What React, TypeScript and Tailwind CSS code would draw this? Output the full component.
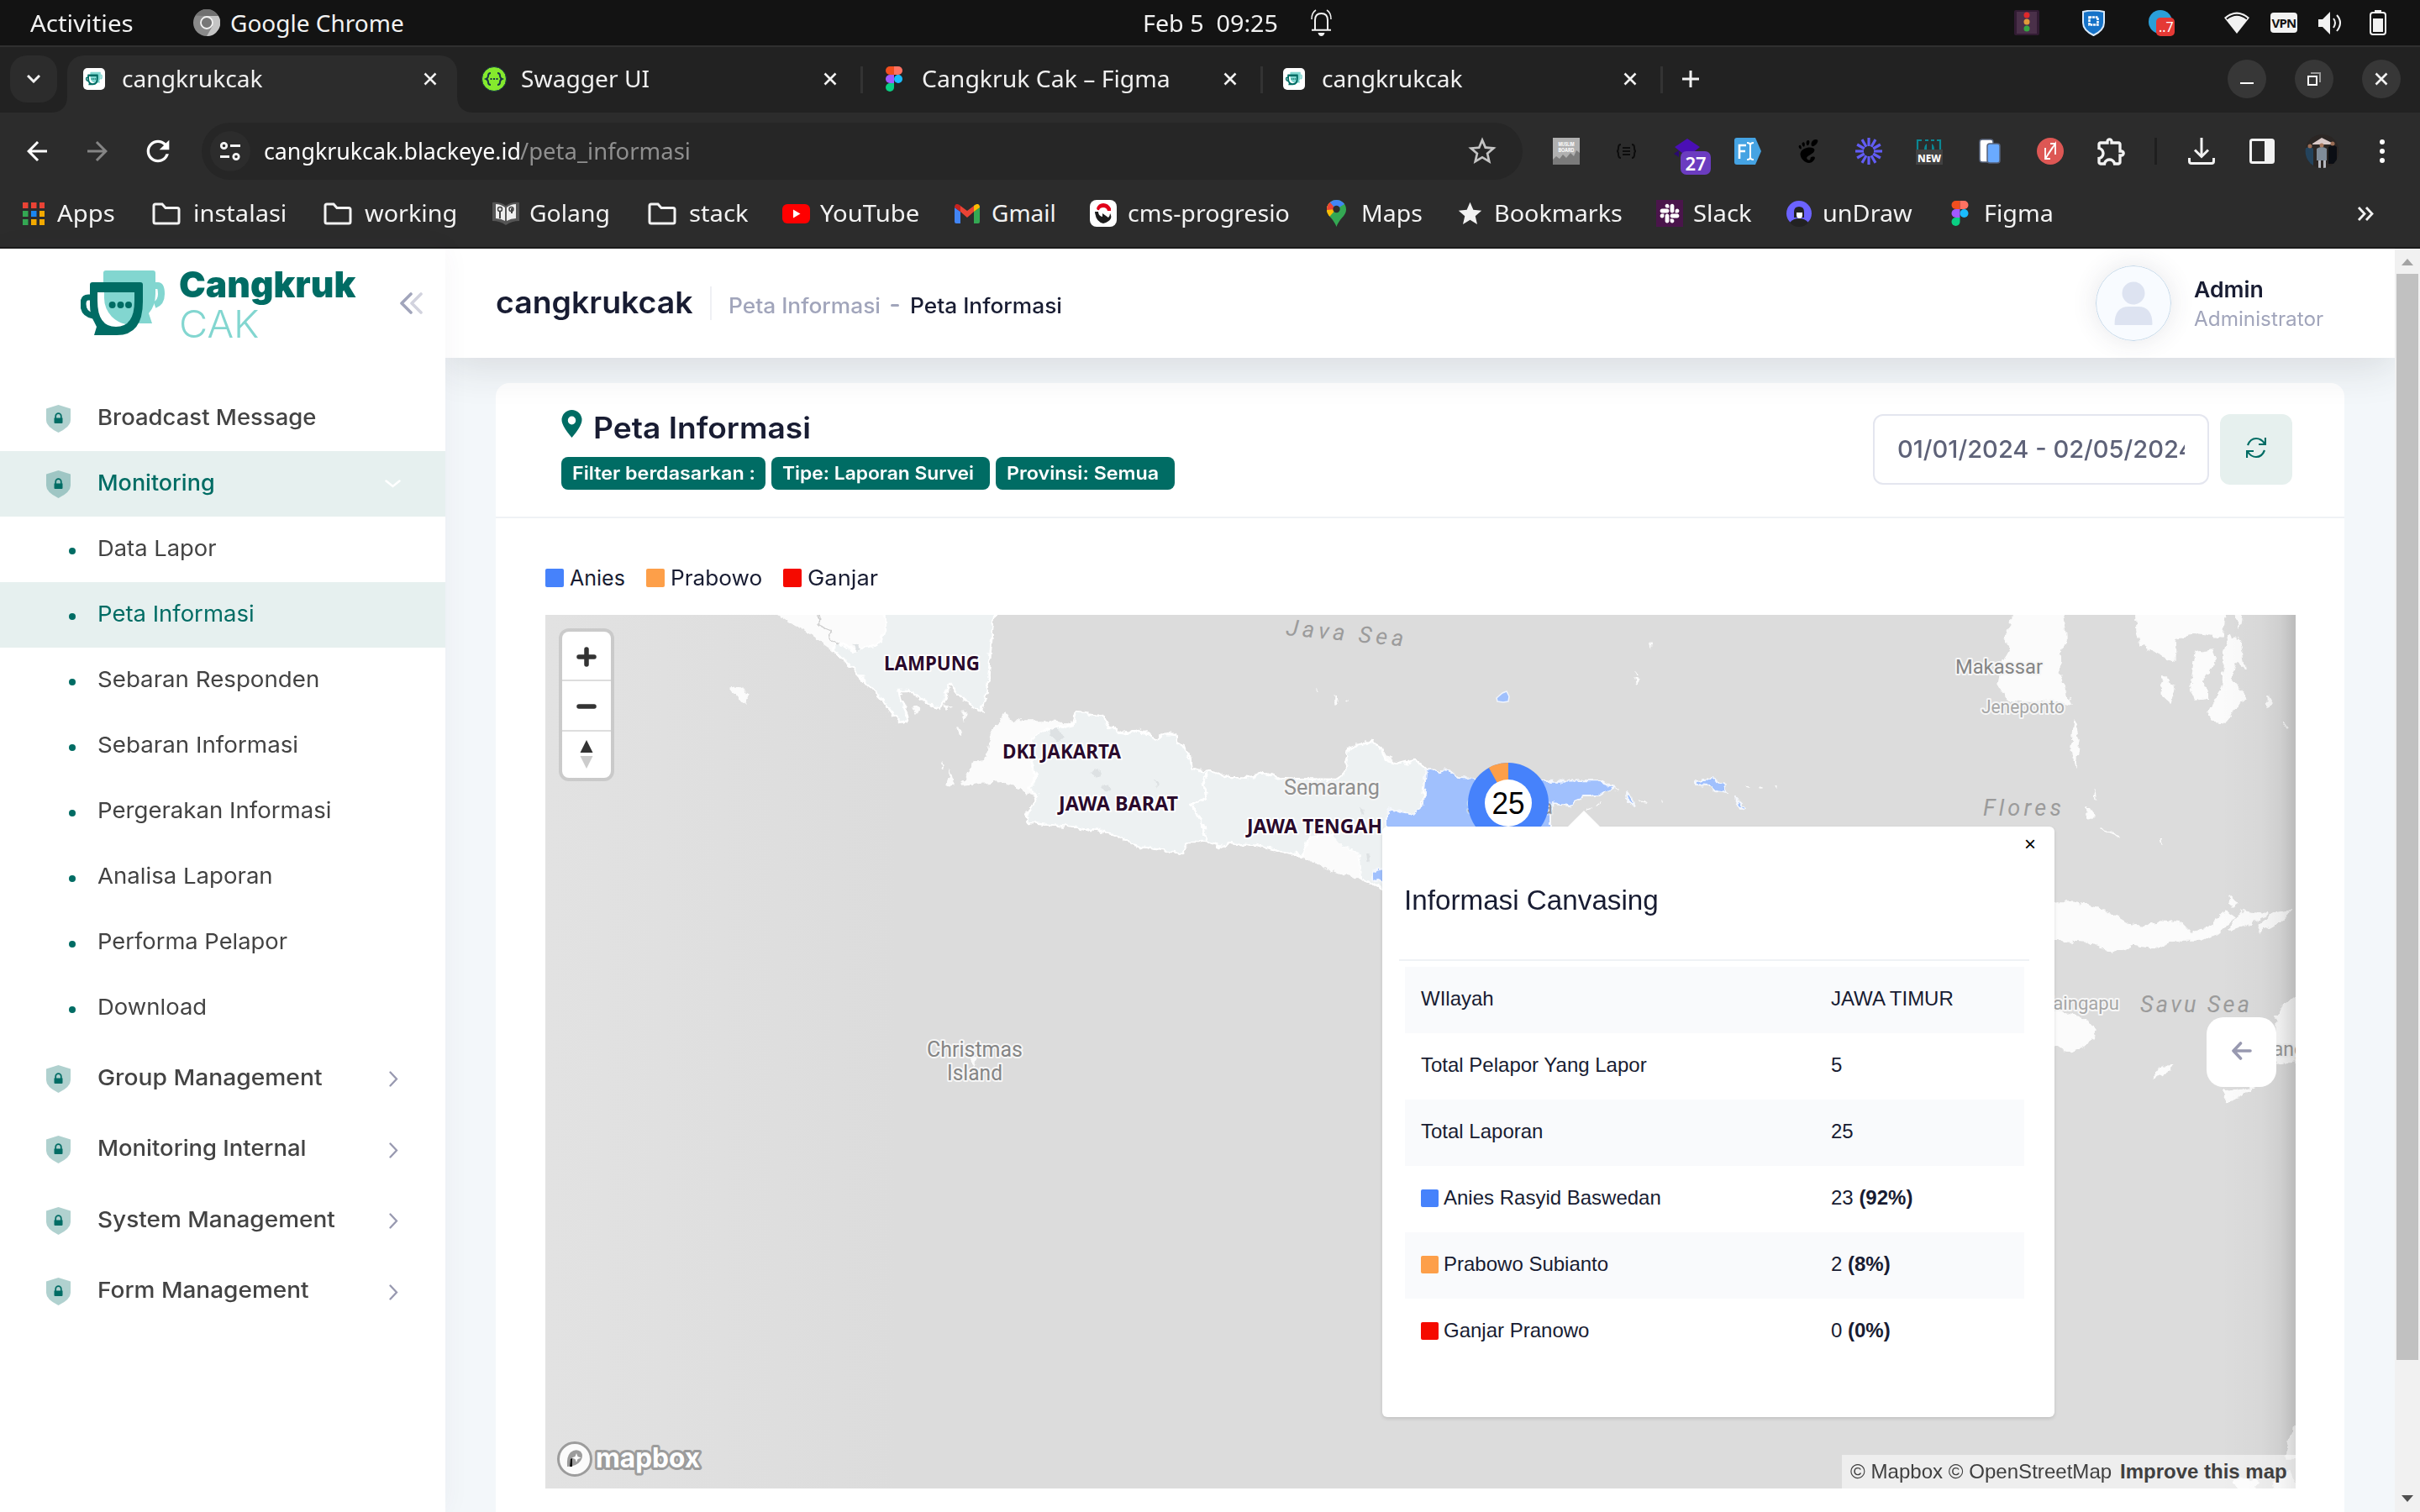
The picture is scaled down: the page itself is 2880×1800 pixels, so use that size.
import { useLayoutEffect, useRef, useState, type ReactNode } from "react";
import { FaSlack } from "react-icons/fa";
import { SiGnome } from "react-icons/si";
import { MdArrowBack, MdArrowForward, MdRefresh, MdStarBorder, MdStar, MdOutlineExtension } from "react-icons/md";

/** One line of text, condensed or widened so that its ink spans `w` pixels. */
function Fit({ w, className = "", children }: { w: number; className?: string; children: ReactNode }) {
  const ref = useRef<HTMLSpanElement>(null);
  const [scale, setScale] = useState(1);
  useLayoutEffect(() => {
    if (ref.current) setScale((w + 1) / ref.current.offsetWidth);
  }, [w]);
  return (
    <span className={`inline-block shrink-0 whitespace-pre ${className}`} style={{ width: w }}>
      <span ref={ref} className="inline-block origin-left" style={{ transform: `scaleX(${scale})` }}>
        {children}
      </span>
    </span>
  );
}

const UI = "font-['Noto_Sans',sans-serif]";

/* ---------- icons ---------- */

function CupArt() {
  return (
    <>
      <path d="M185 340h3q4 0 4 10t-8 13" fill="none" stroke="#82d6d0" strokeWidth="8" />
      <path d="M123 340V325q0-3 3-3h56q3 0 3 3v25q0 14-8 23l4 12h-26q-32-6-32-30z" fill="#82d6d0" />
      <path d="M116 345h44v12q0 32-22 32t-22-32z" fill="#fff" />
      <path d="M124 345h38v12q0 20-12 29-10-2-17-9-9-10-9-22z" fill="#82d6d0" />
      <path d="M110 354h-5q-6 0-6 8 0 12 12 14" fill="none" stroke="#006c64" strokeWidth="7" />
      <path
        fillRule="evenodd"
        d="M107 346v-7q0-3 3-3h57q3 0 3 3v20q0 40-31 40h-27l3-10-3-6q-5-8-5-20zM116 348v10q0 31 22 31t22-31v-10z"
        fill="#006c64"
      />
      <circle cx="133.6" cy="363" r="4" fill="#006c64" />
      <circle cx="143.5" cy="363" r="4" fill="#006c64" />
      <circle cx="153" cy="363" r="4" fill="#006c64" />
    </>
  );
}

function CupFavicon() {
  return (
    <svg className="h-[26px] w-[26px]" viewBox="0 0 26 26">
      <rect width="26" height="26" rx="5" fill="#fff" />
      <g transform="translate(3 4) scale(.2) translate(-96 -318)">
        <CupArt />
      </g>
    </svg>
  );
}

function Figma({ className }: { className: string }) {
  return (
    <svg className={className} viewBox="0 0 20 30">
      <path d="M10 0H5a5 5 0 0 0 0 10h5z" fill="#f24e1e" />
      <path d="M10 0h5a5 5 0 0 1 0 10h-5z" fill="#ff7262" />
      <path d="M10 10H5a5 5 0 0 0 0 10h5z" fill="#a259ff" />
      <circle cx="15" cy="15" r="5" fill="#1abcfe" />
      <path d="M10 20H5a5 5 0 1 0 5 5z" fill="#0acf83" />
    </svg>
  );
}

function Cross() {
  return (
    <svg className="h-4 w-4" viewBox="0 0 16 16" stroke="#f2f2f2" strokeWidth="2.6">
      <path d="M1.5 1.5l13 13M14.5 1.5l-13 13" />
    </svg>
  );
}

function Folder() {
  return (
    <svg className="h-[27px] w-[34px]" viewBox="0 0 34 27" fill="none" stroke="#f2f2f2" strokeWidth="3">
      <path d="M2 4q0-2 2-2h8l4 4.500h14q2 0 2 2V23q0 2-2 2H4q-2 0-2-2z" />
    </svg>
  );
}

function Shield() {
  return (
    <svg className="h-[33px] w-[29px]" viewBox="0 0 29 33">
      <path d="M0 4.500L14.500 0 29 4.500V18q0 8-14.500 15Q0 26 0 18z" fill="#006c64" opacity=".31" />
      <path d="M9.500 15.500h10V21q0 1-1 1h-8q-1 0-1-1z" fill="#006c64" />
      <path d="M11.200 16v-2.500a3.300 3.300 0 0 1 6.600 0V16" fill="none" stroke="#006c64" strokeWidth="1.700" />
    </svg>
  );
}

/* ---------- desktop bar ---------- */

function DesktopBar() {
  return (
    <div className={`flex h-[56px] items-center border-b-2 border-[#303030] bg-[#131313] pr-10 pl-9 text-[28px] leading-9 text-[#f2f2f2] ${UI}`}>
      <Fit w={122} className="-mt-px">Activities</Fit>
      <svg className="ml-[72px] h-8 w-8 shrink-0" viewBox="0 0 32 32">
        <circle cx="16" cy="16" r="16" fill="#8a8a8a" />
        <path d="M16 8h14a16 16 0 0 1-14 24l7-12z" fill="#c4c4c4" />
        <path d="M2.500 7.500A16 16 0 0 1 30 8H16z" fill="#707070" />
        <circle cx="16" cy="16" r="7" fill="#777" stroke="#f2f2f2" strokeWidth="1.800" />
      </svg>
      <Fit w={206} className="-mt-px ml-3">Google Chrome</Fit>
      <Fit w={160} className="-mt-px ml-[880px]">{"Feb 5  09:25"}</Fit>
      <svg className="ml-10 h-[32px] w-[25px] shrink-0" viewBox="0 0 25 32" fill="none" stroke="#f2f2f2" strokeWidth="2">
        <path d="M5 24V13q0-8 7.500-8T20 13v11M1 24.800h23" />
        <path d="M1 12q0-8 5-11M24 12q0-8-5-11" strokeWidth="1.500" />
        <path d="M8.500 28h8q-1 4-4 4t-4-4z" fill="#f2f2f2" stroke="none" />
      </svg>
      <svg className="ml-auto h-[30px] w-[30px] shrink-0" viewBox="0 0 30 30">
        <rect width="30" height="30" rx="2" fill="#321c33" />
        <rect x="3" y="2" width="24" height="26" fill="#4a3049" />
        <circle cx="15" cy="6" r="3.500" fill="#e0282b" />
        <circle cx="15" cy="14" r="3.500" fill="#e09a3a" />
        <circle cx="15" cy="22" r="3.500" fill="#35a542" />
      </svg>
      <svg className="ml-[51px] h-[31px] w-[27px] shrink-0" viewBox="0 0 27 31">
        <path d="M1 2q12-3 25 0v13q0 9-12.500 15Q1 24 1 15z" fill="#1673c8" stroke="#d9eafa" strokeWidth="2" />
        <rect x="8.500" y="8.500" width="10" height="9" fill="none" stroke="#fff" strokeWidth="2.600" strokeDasharray="2.800 0.800" />
        <rect x="11.500" y="11.500" width="4" height="3" fill="#1673c8" />
      </svg>
      <svg className="ml-[52px] h-[32px] w-[32px] shrink-0" viewBox="0 0 32 32">
        <circle cx="14" cy="15" r="14" fill="#2b9fd9" />
        <rect x="9" y="10" width="22" height="22" rx="5" fill="#e53935" />
        <text x="12" y="27" fontSize="16" fill="#fff" fontFamily="Noto Sans">..7</text>
      </svg>
      <svg className="ml-[58px] h-[26px] w-[30px] shrink-0" viewBox="0 0 30 26">
        <path d="M15 26L0 7Q15-6 30 7z" fill="#f2f2f2" />
        <path d="M3 8.500Q15-1 27 8.500" fill="none" stroke="#131313" strokeWidth="1.800" />
      </svg>
      <span className="ml-[25px] flex h-6 w-8 shrink-0 items-center justify-center rounded-[4px] bg-[#f2f2f2] text-[15px] leading-5 font-bold tracking-tighter text-[#131313]">VPN</span>
      <svg className="ml-[25px] h-[27px] w-[30px] shrink-0" viewBox="0 0 30 27" fill="none" stroke="#f2f2f2" strokeWidth="2">
        <path d="M0 9h5l9-9v27l-9-9H0z" fill="#f2f2f2" stroke="none" />
        <path d="M18 8q4 5 0 11M22 4q8 9 0 19" />
      </svg>
      <svg className="ml-[31px] h-[30px] w-5 shrink-0" viewBox="0 0 20 30">
        <rect x="6" width="8" height="4" fill="#f2f2f2" />
        <rect x="1" y="3" width="18" height="26" rx="3" fill="none" stroke="#f2f2f2" strokeWidth="2" />
        <rect x="4" y="10" width="12" height="16" fill="#f2f2f2" />
      </svg>
    </div>
  );
}

/* ---------- browser chrome ---------- */

function TabStrip() {
  return (
    <div className={`flex h-[78px] bg-[#222222] pt-[10px] pr-[23px] pl-3 text-[28px] leading-9 text-[#f0f0f0] ${UI}`}>
      <div className="flex h-14 w-14 items-center justify-center rounded-[20px] bg-[#2c2c2c]">
        <svg className="h-[10px] w-4" viewBox="0 0 16 10" fill="none" stroke="#f2f2f2" strokeWidth="3">
          <path d="M1 1l7 7 7-7" />
        </svg>
      </div>
      <div className="relative ml-3 flex h-[68px] w-[464px] items-center rounded-t-[20px] bg-[#2c2c2c] pr-6 pb-3 pl-[19px]">
        <svg className="absolute bottom-0 -left-5 h-5 w-5" viewBox="0 0 20 20"><path d="M20 0v20H0Q20 20 20 0z" fill="#2c2c2c" /></svg>
        <svg className="absolute -right-5 bottom-0 h-5 w-5" viewBox="0 0 20 20"><path d="M0 0v20h20Q0 20 0 0z" fill="#2c2c2c" /></svg>
        <CupFavicon />
        <Fit w={167} className="-mt-[3px] ml-5">cangkrukcak</Fit>
        <span className="ml-auto"><Cross /></span>
      </div>
      <div className="flex h-14 w-[482px] items-center pr-[30px] pl-[29px]">
        <svg className="h-[30px] w-[30px]" viewBox="0 0 30 30">
          <circle cx="15" cy="15" r="14.500" fill="#85ea2d" stroke="#173647" />
          <path d="M11 8q-3 0-3 3t-2.500 4Q8 16 8 19t3 3M19 8q3 0 3 3t2.500 4Q22 16 22 19t-3 3" fill="none" stroke="#173647" strokeWidth="2" />
          <path d="M10.500 15h2M14 15h2M17.500 15h2" stroke="#173647" strokeWidth="2" />
        </svg>
        <Fit w={152} className="-mt-[3px] ml-[17px]">Swagger UI</Fit>
        <span className="ml-auto"><Cross /></span>
      </div>
      <span className="-ml-[2px] mt-[13px] h-8 w-[3px] bg-[#333333]" />
      <div className="flex h-14 w-[475px] items-center pr-[30px] pl-[27px]">
        <Figma className="h-[30px] w-5" />
        <Fit w={295} className="-mt-[3px] ml-[23px]">Cangkruk Cak – Figma</Fit>
        <span className="ml-auto"><Cross /></span>
      </div>
      <span className="-ml-[2px] mt-[13px] h-8 w-[3px] bg-[#333333]" />
      <div className="flex h-14 w-[475px] items-center pr-[30px] pl-6">
        <CupFavicon />
        <Fit w={167} className="-mt-[3px] ml-5">cangkrukcak</Fit>
        <span className="ml-auto"><Cross /></span>
      </div>
      <span className="-ml-[2px] mt-[13px] h-8 w-[3px] bg-[#333333]" />
      <svg className="mt-[18px] ml-[23px] h-5 w-5" viewBox="0 0 20 20" stroke="#f2f2f2" strokeWidth="3"><path d="M10 0v20M0 10h20" /></svg>
      <div className="ml-auto flex h-14 items-center gap-[34px]">
        <span className="flex h-[46px] w-[46px] items-center justify-center rounded-full bg-[#373737]">
          <span className="mt-[10px] h-[2px] w-4 bg-white" />
        </span>
        <span className="flex h-[46px] w-[46px] items-center justify-center rounded-full bg-[#373737]">
          <svg className="h-4 w-4" viewBox="0 0 16 16" fill="none" strokeWidth="2">
            <path d="M4 1h11v11" stroke="#999" />
            <rect x="1" y="5" width="10" height="10" stroke="#fff" />
          </svg>
        </span>
        <span className="flex h-[46px] w-[46px] items-center justify-center rounded-full bg-[#373737]">
          <Cross />
        </span>
      </div>
    </div>
  );
}

function Extensions() {
  return (
    <>
      <svg className="ml-9 h-8 w-8" viewBox="0 0 32 32">
        <rect width="32" height="32" fill="#b0b0b0" />
        <path d="M0 26l4-4 4 3 4-5 4 4 5-6 4 4 3-7 4 3v14H0z" fill="#7b7b7b" />
        <text x="16" y="10" fontSize="6" fontWeight="700" textAnchor="middle" textLength="19" lengthAdjust="spacingAndGlyphs" fill="#fff" fontFamily="Inter">MUSLIM</text>
        <text x="16" y="16.500" fontSize="6" fontWeight="700" textAnchor="middle" textLength="19" lengthAdjust="spacingAndGlyphs" fill="#fff" fontFamily="Inter">BOARD</text>
      </svg>
      <svg className="ml-[43px] h-5 w-[25px]" viewBox="0 0 25 20" fill="none" stroke="#0d0d0d" strokeWidth="2">
        <path d="M6 2Q3 2 3 6t-2 4q2 0 2 4t3 4M19 2q3 0 3 4t2 4q-2 0-2 4t-3 4M8 6h9M8 10h9M8 14h9" />
      </svg>
      <div className="relative ml-[44px] h-8 w-[44px]">
        <svg className="h-8 w-8" viewBox="0 0 32 32">
          <path d="M16 1l15 10-15 12L1 11z" fill="#4a0fb5" />
          <path d="M0 19l6-4v8z" fill="#2a0a70" />
        </svg>
        <span className="absolute top-4 left-2 flex h-7 w-9 items-center justify-center rounded-[7px] bg-[#6b3cc0] text-[22px] leading-7 font-semibold text-white">27</span>
      </div>
      <svg className="ml-7 h-8 w-8" viewBox="0 0 32 32">
        <path d="M3 0h22l7 16-7 16H3q-3 0-3-3V3q0-3 3-3z" fill="#45a3e3" />
        <path d="M6 25V9h8M6 16h7" fill="none" stroke="#fff" strokeWidth="2.600" />
        <path d="M19 8v16M15 6q4 0 4 3 0-3 4-3M15 26q4 0 4-3 0 3 4 3" fill="none" stroke="#fff" strokeWidth="2" />
      </svg>
      <SiGnome className="ml-[42px] h-[28px] w-[28px] text-black" />
      <svg className="ml-[42px] h-8 w-8" viewBox="-16 -16 32 32" stroke="#625df5" strokeWidth="3.200">
        {[0, 30, 60, 90, 120, 150, 180, 210, 240, 270, 300, 330].map((a) => (
          <path key={a} d="M0-6V-16" transform={`rotate(${a})`} />
        ))}
      </svg>
      <svg className="ml-10 h-8 w-8" viewBox="0 0 32 32">
        <path d="M2 14V3h5M11 3h4M18 3h4M25 3h4v11" fill="none" stroke="#0b8793" strokeWidth="2.200" />
        <path d="M10 14q0-5 3-7v7zM22 14q0-5-3-7v7z" fill="#0b8793" />
        <rect y="14" width="32" height="18" fill="#424242" />
        <text x="16" y="28.500" fontSize="13" fontWeight="800" textAnchor="middle" textLength="28" lengthAdjust="spacingAndGlyphs" fill="#fff" fontFamily="Noto Sans">NEW</text>
      </svg>
      <svg className="ml-[43px] h-8 w-[26px]" viewBox="0 0 26 32">
        <rect x="1" y="2" width="16" height="27" rx="3" fill="#fff" stroke="#56627a" strokeWidth="1.500" />
        <rect x="10" y="7" width="15" height="23" rx="3" fill="#6aaaff" stroke="#56627a" strokeWidth="1.500" />
      </svg>
      <svg className="ml-[43px] h-8 w-8" viewBox="0 0 32 32" fill="none" stroke="#fff" strokeWidth="1.800">
        <circle cx="16" cy="16" r="16" fill="#dd5754" stroke="none" />
        <path d="M10 12v13h6M10 25L22 7v13M22 7h-6M13 20l6-9" />
      </svg>
      <MdOutlineExtension className="ml-[37px] h-[40px] w-[40px] text-[#f2f2f2]" />
      <span className="ml-[31px] h-8 w-[3px] bg-[#1f1f1f]" />
      <svg className="ml-[37px] h-8 w-8" viewBox="0 0 32 32" fill="none" stroke="#f2f2f2" strokeWidth="3">
        <path d="M16 0v22M8 14.500l8 8 8-8M1.500 24v4q0 2.500 2.500 2.500h24q2.500 0 2.500-2.500v-4" />
      </svg>
      <svg className="ml-[41px] h-[30px] w-[30px]" viewBox="0 0 30 30">
        <rect x="1.500" y="1.500" width="27" height="27" rx="2" fill="none" stroke="#f2f2f2" strokeWidth="3" />
        <path d="M18 1h10v28H18z" fill="#f2f2f2" />
      </svg>
      <svg className="ml-9 h-10 w-[41px]" viewBox="0 0 41 40">
        <defs><clipPath id="me"><circle cx="20.500" cy="20" r="20" /></clipPath></defs>
        <g clipPath="url(#me)">
          <rect width="41" height="40" fill="#2b2624" />
          <path d="M9 11L20 4l12 6v2H9z" fill="#d9c9c8" />
          <path d="M0 17q5-4 10 0v23H0z" fill="#24435c" />
          <path d="M14 17q6-4 12 0v14H14z" fill="#7f8c99" />
          <path d="M28 15q6-4 10 0v20H28z" fill="#0b0e14" />
          <circle cx="20" cy="13" r="2.500" fill="#a8795f" />
          <circle cx="33" cy="11" r="2.500" fill="#9a6d55" />
          <circle cx="6" cy="14" r="2.500" fill="#9a6d55" />
          <path d="M16 31h3v9h-3zM22 31h3v9h-3z" fill="#b7b9c0" />
        </g>
      </svg>
      <span className="ml-12 flex flex-col gap-[5px]">
        <span className="h-[6px] w-[6px] rounded-full bg-white" />
        <span className="h-[6px] w-[6px] rounded-full bg-white" />
        <span className="h-[6px] w-[6px] rounded-full bg-white" />
      </span>
    </>
  );
}

function Toolbar() {
  return (
    <div className={`flex h-[92px] items-center bg-[#2c2c2c] pl-[26px] text-[28px] leading-9 text-white *:shrink-0 ${UI}`}>
      <MdArrowBack className="h-9 w-9" />
      <MdArrowForward className="ml-9 h-9 w-9 text-[#858585]" />
      <MdRefresh className="ml-[34px] h-10 w-10" />
      <div className="ml-8 flex h-[68px] w-[1572px] items-center rounded-full bg-[#262626] pr-[28px] pl-[10px]">
        <span className="flex h-12 w-12 items-center justify-center rounded-full bg-[#2c2c2c]">
          <svg className="h-[22px] w-6" viewBox="0 0 24 22" fill="none" stroke="#f2f2f2" strokeWidth="2.800">
            <circle cx="4.500" cy="4.500" r="3.200" />
            <path d="M12 4.500h12M0 17.500h11" />
            <circle cx="19" cy="17.500" r="3.200" />
          </svg>
        </span>
        <Fit w={305} className="-mt-[2px] ml-4">cangkrukcak.blackeye.id</Fit>
        <Fit w={202} className="-mt-[2px] text-[#8f8f8f]">/peta_informasi</Fit>
        <MdStarBorder className="ml-auto h-10 w-10 text-[#c4c4c4]" />
      </div>
      <Extensions />
    </div>
  );
}

function Bookmark({ ml = "", gap, w, icon, label }: { ml?: string; gap: string; w: number; icon: ReactNode; label: string }) {
  return (
    <div className={`flex items-center *:shrink-0 ${ml} ${gap}`}>
      {icon}
      <Fit w={w} className="-mt-[3px]">{label}</Fit>
    </div>
  );
}

const appDots = ["#ea4335", "#ea4335", "#ea4335", "#34a853", "#1a86f0", "#f2a900", "#34a853", "#f2a900", "#f2a900"];

function BookmarkBar() {
  return (
    <div className={`flex h-[70px] border-b-2 border-[#1a1a1a] bg-[#2c2c2c] pr-[54px] pb-3 pl-[27px] text-[28px] leading-9 text-[#f2f2f2] *:shrink-0 ${UI}`}>
      <Bookmark gap="gap-[15px]" w={68} label="Apps" icon={
        <svg className="h-[27px] w-[26px]" viewBox="0 0 26 27">
          {appDots.map((c, i) => <rect key={i} x={(i % 3) * 10} y={Math.floor(i / 3) * 10} width="6.500" height="7" fill={c} />)}
        </svg>} />
      <Bookmark ml="ml-[45px]" gap="gap-[15px]" w={110} label="instalasi" icon={<Folder />} />
      <Bookmark ml="ml-[45px]" gap="gap-[15px]" w={109} label="working" icon={<Folder />} />
      <Bookmark ml="ml-[43px]" gap="gap-3" w={95} label="Golang" icon={
        <svg className="h-7 w-8" viewBox="0 0 32 28">
          <path d="M0 1q9-1 16 4 7-5 16-4v22q-9 0-16 5-7-5-16-5z" fill="#555" />
          <path d="M4 3q6 0 11 4v16q-5-3-11-3zM28 3q-6 0-11 4v16q5-3 11-3z" fill="#eee" />
          <path d="M9 12v8M23 8v6" stroke="#444" strokeWidth="2" />
          <circle cx="9" cy="9" r="2.500" fill="none" stroke="#444" strokeWidth="1.500" />
          <circle cx="22.500" cy="9" r="2.500" fill="none" stroke="#444" strokeWidth="1.500" />
        </svg>} />
      <Bookmark ml="ml-[46px]" gap="gap-[15px]" w={70} label="stack" icon={<Folder />} />
      <Bookmark ml="ml-[41px]" gap="gap-3" w={117} label="YouTube" icon={
        <svg className="h-[23px] w-[33px]" viewBox="0 0 33 23"><rect width="33" height="23" rx="6" fill="#f00" /><path d="M13 6.500l8.500 5-8.500 5z" fill="#fff" /></svg>} />
      <Bookmark ml="ml-[43px]" gap="gap-[14px]" w={76} label="Gmail" icon={
        <svg className="h-[23px] w-[30px]" viewBox="0 0 30 23">
          <path d="M0 4v17q0 2 2 2h5V9z" fill="#4285f4" />
          <path d="M30 4v17q0 2-2 2h-5V9z" fill="#34a853" />
          <path d="M7 9v-7l8 6 8-6v7l-8 7z" fill="#ea4335" />
          <path d="M0 3q1-5 6-2l1 1v7L0 4z" fill="#c5221f" />
          <path d="M30 3q-1-5-6-2l-1 1v7l7-5z" fill="#fbbc04" />
        </svg>} />
      <Bookmark ml="ml-[41px]" gap="gap-[13px]" w={192} label="cms-progresio" icon={
        <svg className="h-8 w-8" viewBox="0 0 32 32">
          <rect width="32" height="32" rx="8" fill="#fff" />
          <path d="M8 10q2-6 8-6t9 6v3h-4q-1-4-5-4t-5 3q-2 1-3-2z" fill="#e1001a" />
          <path d="M6 14h4q0 5 5 6v-4l7 5q2-2 2-5 2 3 1 6-2 4-9 6-9-2-10-14z" fill="#1c1c1c" />
        </svg>} />
      <Bookmark ml="ml-[45px]" gap="gap-[18px]" w={72} label="Maps" icon={
        <svg className="h-8 w-[23px]" viewBox="0 0 23 32">
          <defs><clipPath id="pin"><path d="M11.500 0A11.500 11.500 0 0 0 0 11.500C0 19 8 22 11.500 32 15 22 23 19 23 11.500A11.500 11.500 0 0 0 11.500 0z" /></clipPath></defs>
          <g clipPath="url(#pin)">
            <rect width="23" height="32" fill="#34a853" />
            <path d="M11 11L-2 26V6z" fill="#fbbc04" />
            <path d="M11 11L0 22V0z" fill="#fbbc04" />
            <path d="M11 11L0 12V2l4-1z" fill="#ea4335" />
            <path d="M11 11L3 2 8-1h15l-2 6z" fill="#4285f4" />
          </g>
          <circle cx="11.500" cy="11" r="4.200" fill="#2c2c2c" />
        </svg>} />
      <Bookmark ml="ml-[41px]" gap="gap-3" w={152} label="Bookmarks" icon={<MdStar className="h-[33px] w-[33px]" />} />
      <Bookmark ml="ml-[41px]" gap="gap-3" w={69} label="Slack" icon={
        <span className="flex h-8 w-8 items-center justify-center bg-[#4a154b]"><FaSlack className="h-[26px] w-[26px] text-white" /></span>} />
      <Bookmark ml="ml-[42px]" gap="gap-[13px]" w={106} label="unDraw" icon={
        <svg className="h-[31px] w-[30px]" viewBox="0 0 30 31">
          <circle cx="15" cy="15" r="15" fill="#6c63ff" />
          <path d="M9 20V13q0-6 6-6t6 6v7z" fill="#222" />
          <path d="M12 14h7v3q0 4-3.500 4T12 17z" fill="#fff" />
          <path d="M4 26q4-5 11-5t11 5q-4 5-11 5T4 26z" fill="#222" />
        </svg>} />
      <Bookmark ml="ml-[47px]" gap="gap-[18px]" w={82} label="Figma" icon={<Figma className="h-[30px] w-[21px]" />} />
      <svg className="my-auto ml-auto h-[17px] w-[21px]" viewBox="0 0 21 17" fill="none" stroke="#f2f2f2" strokeWidth="2.800"><path d="M2 1l7 7.500L2 16M11 1l7 7.500-7 7.500" /></svg>
    </div>
  );
}

/* ---------- side menu ---------- */

function MenuRow({ label, w, active = false, chevron }: { label: string; w: number; active?: boolean; chevron?: "right" | "down" }) {
  return (
    <div className={`flex h-[78px] shrink-0 items-center pr-[53px] pl-[55px] font-medium ${active ? "bg-[#e6f0ef] text-[#006c64]" : "text-[#434343]"}`}>
      <Shield />
      <Fit w={w} className="-mt-[3px] ml-8">{label}</Fit>
      {chevron === "down" && (
        <svg className="ml-auto h-[11px] w-[19px]" viewBox="0 0 19 11" fill="none" stroke="#fff" strokeWidth="2.500" strokeLinecap="round"><path d="M1.500 1.500l8 6.500 8-6.500" /></svg>
      )}
      {chevron === "right" && (
        <svg className="mt-px mr-[3px] ml-auto h-[19px] w-[11px]" viewBox="0 0 11 19" fill="none" stroke="#9899b0" strokeWidth="2.300" strokeLinecap="round"><path d="M1.500 1.500l7.500 8-7.500 8" /></svg>
      )}
    </div>
  );
}

const monitoringItems = [
  { label: "Data Lapor", w: 141 },
  { label: "Peta Informasi", w: 186, active: true },
  { label: "Sebaran Responden", w: 263 },
  { label: "Sebaran Informasi", w: 238 },
  { label: "Pergerakan Informasi", w: 277 },
  { label: "Analisa Laporan", w: 208 },
  { label: "Performa Pelapor", w: 225 },
  { label: "Download", w: 129 },
];

function SideMenu() {
  return (
    <nav className="z-20 flex w-[530px] shrink-0 flex-col bg-white text-[26px] leading-9 shadow-[0_0_30px_rgba(82,63,105,0.05)]">
      <div className="flex h-[163px] shrink-0 pt-6 pl-24">
        <svg className="h-[82px] w-[102px]" viewBox="96 320 102 82"><CupArt /></svg>
        <div className="ml-[15px] flex flex-col">
          <Fit w={209} className="h-[42px] text-[43px] leading-[37px] font-black text-[#006c64]">Cangkruk</Fit>
          <Fit w={94} className="h-[48px] text-[45px] leading-[47px] font-light text-[#82d6d0]">CAK</Fit>
        </div>
        <svg className="mt-[28px] ml-[54px] h-[26px] w-7" viewBox="0 0 28 26" fill="none" strokeWidth="3.600" strokeLinecap="round" strokeLinejoin="round">
          <path d="M13 2L2 13l11 11" stroke="#a1a5bb" />
          <path d="M25 2L14 13l11 11" stroke="#d2d3de" />
        </svg>
      </div>
      <MenuRow label="Broadcast Message" w={259} />
      <MenuRow label="Monitoring" w={139} active chevron="down" />
      {monitoringItems.map((m) => (
        <div key={m.label} className={`flex h-[78px] shrink-0 items-center pl-[82px] ${m.active ? "bg-[#e6f0ef] text-[#006c64]" : "text-[#434343]"}`}>
          <span className="mt-[3px] h-2 w-2 rounded-full bg-[#006c64]" />
          <Fit w={m.w} className="-mt-[3px] ml-[26px]">{m.label}</Fit>
        </div>
      ))}
      <div className="mt-[6px] flex flex-col gap-[6.5px]">
        <MenuRow label="Group Management" w={266} chevron="right" />
        <MenuRow label="Monitoring Internal" w={247} chevron="right" />
        <MenuRow label="System Management" w={282} chevron="right" />
        <MenuRow label="Form Management" w={251} chevron="right" />
      </div>
    </nav>
  );
}

/* ---------- page header ---------- */

function PageHeader() {
  return (
    <header className="z-10 flex h-[130px] shrink-0 items-center bg-white pr-[86px] pl-[60px] shadow-[0_10px_50px_rgba(40,40,50,0.14)]">
      <Fit w={234} className="-mt-[2px] text-[36px] leading-[44px] font-semibold text-[#181c32]">cangkrukcak</Fit>
      <span className="ml-[21px] h-10 w-[2px] bg-[#eff0f4]" />
      <Fit w={180} className="mt-[5px] ml-5 text-[25px] leading-8 font-medium text-[#a1a5bb]">Peta Informasi</Fit>
      <span className="mt-[5px] ml-[13px] h-[3px] w-[10px] rounded bg-[#a1a5bb]" />
      <Fit w={180} className="mt-[5px] ml-[13px] text-[25px] leading-8 font-medium text-[#181c32]">Peta Informasi</Fit>
      <svg className="ml-auto h-[90px] w-[90px] rounded-full shadow-[0_0_30px_rgba(60,60,80,0.12)]" viewBox="0 0 90 90">
        <circle cx="45" cy="45" r="44.500" fill="#f8fbff" stroke="#c5d8e8" />
        <circle cx="45" cy="33" r="13.500" fill="#dde3f1" />
        <path d="M22.500 70q0-21 17-21h11q17 0 17 21 0 1-1 1h-43q-1 0-1-1z" fill="#dde3f1" />
      </svg>
      <div className="ml-[27px] flex flex-col">
        <Fit w={82} className="h-[36px] text-[26px] leading-[37px] font-semibold text-[#181c32]">Admin</Fit>
        <Fit w={153} className="h-[34px] text-[24px] leading-[35px] text-[#a1a5bb]">Administrator</Fit>
      </div>
    </header>
  );
}

/* ---------- map ---------- */

type MapLabel = { t: string; x: number; y: number; w: number };
const provinces: MapLabel[] = [
  { t: "LAMPUNG", x: 1052, y: 798, w: 114 },
  { t: "DKI JAKARTA", x: 1193, y: 903, w: 141 },
  { t: "JAWA BARAT", x: 1260, y: 965, w: 142 },
  { t: "JAWA TENGAH", x: 1484, y: 992, w: 161 },
];
const cities: (MapLabel & { s: number; c: string })[] = [
  { t: "Semarang", x: 1528, y: 946, w: 114, s: 25, c: "#8f8f8f" },
  { t: "Christmas", x: 1103, y: 1258, w: 114, s: 25, c: "#858585" },
  { t: "Island", x: 1127, y: 1286, w: 66, s: 25, c: "#858585" },
  { t: "Makassar", x: 2327, y: 802, w: 104, s: 24, c: "#858585" },
  { t: "Jeneponto", x: 2358, y: 849, w: 99, s: 22, c: "#a6a6a6" },
  { t: "Waingapu", x: 2424, y: 1202, w: 98, s: 22, c: "#a6a6a6" },
  { t: "Kupang", x: 2665, y: 1257, w: 78, s: 24, c: "#9a9a9a" },
  { t: "Surabaya", x: 1746, y: 969, w: 102, s: 24, c: "#8f9298" },
];

function MapCanvas() {
  return (
    <svg className="block h-[1040px] w-[2083px]" viewBox="649 732 2083 1040">
      <defs>
        <filter id="coast" filterUnits="userSpaceOnUse" x="629" y="712" width="2123" height="1080" colorInterpolationFilters="sRGB">
          <feTurbulence type="fractalNoise" baseFrequency="0.11" numOctaves="3" seed="4" />
          <feDisplacementMap in="SourceGraphic" scale="9" xChannelSelector="R" yChannelSelector="G" />
        </filter>
        <linearGradient id="leftEdge"><stop offset="0" stopColor="#e2e2e2" /><stop offset="1" stopColor="#dcdcdc" /></linearGradient>
        <linearGradient id="rightEdge"><stop offset="0" stopColor="#000" stopOpacity="0" /><stop offset="0.55" stopColor="#000" stopOpacity=".02" /><stop offset="0.8" stopColor="#000" stopOpacity=".06" /><stop offset="1" stopColor="#000" stopOpacity=".15" /></linearGradient>
      </defs>
      <rect x="649" y="732" width="2083" height="1040" fill="#dcdcdc" />
      <rect x="649" y="732" width="420" height="1040" fill="url(#leftEdge)" />
      <g filter="url(#coast)">
        <g fill="#fbfbfb" stroke="#fbfbfb" strokeWidth="1.500" strokeLinejoin="round">
          {/* Sumatra */}
          <path d="M920 715L925 731 959 751 991 774 1016 797 1048 831 1070 859 1081 857 1069 821 1080 821 1100 834 1120 844 1130 814 1144 831 1169 848 1176 812 1179 774 1182 739 1188 715z" />
          {/* Java */}
          <path d="M1195 848L1190 860 1179 873 1174 902 1160 906 1145 934 1195 930 1223 944 1235 946 1222 972 1225 980 1284 985 1329 994 1351 1007 1408 1016 1415 1003 1437 1003 1459 1010 1463 1003 1495 1006 1549 1019 1584 1036 1619 1046 1660 1056V906L1633 883 1610 892 1600 928 1523 927 1502 919 1488 926 1463 925 1438 918 1419 916 1415 894 1402 885 1399 874 1386 873 1378 880 1356 869 1338 874 1319 865 1310 851 1280 848 1276 862 1243 858 1204 858z" />
          {/* Sulawesi and its islands */}
          <path d="M2396 715L2393 745 2386 760 2393 771 2384 788 2380 799 2377 815 2388 833 2416 835 2449 835 2464 839 2451 803 2451 779 2459 758 2455 715z" />
          <path d="M2468 856L2474 882 2469 914 2465 890z" />
          <path d="M2543 715V750L2547 767 2571 779 2589 786 2588 761 2612 753 2645 758 2650 715z" />
          <path d="M2654 715H2670L2665 746z" />
          <path d="M2612 777L2633 773 2637 787 2620 811 2630 831 2612 833 2608 819z" />
          <path d="M2653 757L2666 764 2671 795 2660 785 2655 807 2673 831 2661 840 2650 860 2633 858 2629 846 2645 819 2647 779z" />
          <path d="M2575 805L2588 815 2584 837 2571 825z" />
          <path d="M2699 829l4 8-3 6zM2716 858l6 9z" />
          {/* Flores, Alor, Sumba, Timor, Rote, Savu */}
          <path d="M2440 1076L2449 1074 2465 1074 2486 1078 2514 1088 2535 1101 2555 1103 2571 1097 2596 1099 2608 1111 2628 1105 2649 1086 2661 1092 2641 1109 2620 1119 2592 1119 2567 1129 2539 1125 2514 1133 2486 1121 2440 1119z" />
          <path d="M2669 1084L2698 1088 2680 1098 2653 1107zM2686 1104L2702 1090 2727 1084 2712 1098 2690 1110zM2653 1068l8 7-5 4z" />
          <path d="M2440 1203L2482 1212 2495 1228 2486 1242 2465 1251 2440 1244z" />
          <path d="M2584 1267L2580 1277 2563 1283 2572 1271zM2647 1299L2682 1293 2669 1303 2650 1313z" />
          <path d="M2745 1174L2718 1196 2709 1210 2710 1266 2745 1262z" />
          <path d="M2484 960l8 12-8 2zM2498 986l24 10zM2571 998l2 6zM2494 943l1 8z" />
          <path d="M2738 1680l-12 30-6 26 20 0zM2660 1762l14-4 14 8-10 12h-12zM2705 1764l20-12 15 30h-30z" />
          {/* islets */}
          <path d="M869 819l10-1 12 8-4 10-8-4zM1088 842l6 1-3 6zM1146 846l4 2-2 12zM1124 840l8 1-6 4zM1138 866l7 3-3 8zM1131 918l4 15-8 2zM1121 908l2 9zM1588 828l4 7-4 4zM1567 822l2 3zM1602 834l3 1zM1156 1260l7-2-3 8z" />
          <path d="M1947 800l1 3zM1946 808l4 2-2 5zM1963 766l1 5zM2079 937l2 1zM2094 937l2 1zM2111 937l2 2zM1952 954l6 1zM1976 954l3 2zM1922 938l4 3zM1900 960l6-4zM1888 964l6-2z" />
        </g>
        <g fill="#edf1f2" stroke="#fff" strokeWidth="2.500" strokeLinejoin="round">
          <path d="M1053 715L1054 750 1048 766 1016 774 997 766 991 774 1016 797 1048 831 1070 859 1081 857 1069 821 1080 821 1100 834 1120 844 1130 814 1144 831 1169 848 1176 812 1179 774 1182 739 1188 715z" />
          <path d="M1276 862L1280 848 1310 851 1319 865 1338 874 1356 869 1378 880 1386 873 1399 874 1402 885 1415 894 1419 916 1438 918 1431 934 1437 950 1418 957 1431 980 1437 1003 1415 1003 1408 1016 1351 1007 1329 994 1284 985 1225 980 1222 972 1235 946 1224 940 1233 925 1227 904 1228 880 1243 870z" />
          <path d="M1438 918L1463 925 1488 926 1502 919 1523 927 1590 928 1600 922 1606 892 1622 884 1633 883 1643 888 1649 906 1665 909 1684 904 1698 916 1690 970 1651 964V1060L1619 1046 1616 1013 1597 1009 1584 994 1558 997 1549 1019 1495 1006 1463 1003 1459 1010 1437 1003 1431 980 1418 957 1437 950 1431 934z" />
        </g>
        <path d="M976 725l-2 19 14 8 2 12 10 4" fill="none" stroke="#cfcfcf" strokeWidth="1.500" />
        <path d="M1586 995l12 14 18 4 3 33-35-10-32-18 6-20z" fill="#fbfbfb" />
        <path d="M1300 918l8-2 2 6-6 4zM1310 938l8-5 4 8-8 2zM1373 928l5 2-3 7zM1618 960l7 2-4 8zM1626 1016l6 2-4 10zM1248 868l10-2 8 14-8 2zM1016 768l6-2 2 6-5 2z" fill="#dde1e3" />
        <g fill="#a0c0fd" stroke="#f4f7fd" strokeWidth="2" strokeLinejoin="round">
          <path d="M1698 916L1726 918 1735 926 1837 930 1902 929 1921 936 1902 947 1884 947 1869 959 1845 957V1000H1651V963L1682 969 1695 957z" />
          <path d="M1631 1038l16-4v18l-16-6z" />
          <path d="M2018 929l20-2 14 8 4 8-14-2-6-6-18-1zM2066 950l10 10-4 3zM1936 944l6 4 2 9-7-3z" />
        </g>
      </g>
      <path d="M1781 831l7-6 5-2 3 6-1 6-6 1-7-1z" fill="#a0c0fd" stroke="#f0f4fc" strokeWidth="1.500" />
      <g fontFamily="Roboto, sans-serif" stroke="#f6f6f6" strokeWidth="4" strokeLinejoin="round" paintOrder="stroke">
        {cities.map((c) => (
          <text key={c.t} x={c.x} y={c.y} textLength={c.w} lengthAdjust="spacingAndGlyphs" fontSize={c.s} fill={c.c} strokeOpacity={c.t === "Surabaya" ? 0.4 : 1}>{c.t}</text>
        ))}
      </g>
      <g fontFamily="'Noto Sans', sans-serif" fontWeight="700" fontSize="22.500" fill="#2a0a2c" stroke="#fff" strokeWidth="4" strokeLinejoin="round" paintOrder="stroke">
        {provinces.map((p) => (
          <text key={p.t} x={p.x} y={p.y} textLength={p.w} lengthAdjust="spacingAndGlyphs">{p.t}</text>
        ))}
      </g>
      <g fontFamily="Roboto, sans-serif" fontStyle="italic" fontSize="27" fill="#9b9b9b">
        <text x="1530" y="756" textLength="140" transform="rotate(5.500 1530 756)">Java Sea</text>
        <text x="2360" y="971" textLength="93">Flores</text>
        <text x="2547" y="1205" textLength="130">Savu Sea</text>
      </g>
      <circle cx="1795" cy="956" r="48" fill="#4682fb" />
      <path d="M1771.900 913.900A48 48 0 0 1 1795 908V956z" fill="#fd9f49" />
      <circle cx="1795" cy="956" r="28" fill="#fff" />
      <text x="1795" y="969" textAnchor="middle" fontFamily="Liberation Sans, sans-serif" fontSize="36" textLength="39" lengthAdjust="spacingAndGlyphs">25</text>
      <rect x="2642" y="732" width="90" height="1040" fill="url(#rightEdge)" />
      <circle cx="684" cy="1737" r="19.500" fill="#fbfbfb" stroke="#9c9c9c" strokeWidth="3" />
      <path d="M675 1746q-1-12 4-17 6-5 12-1 4 5 0 11-5 7-16 7z" fill="#9c9c9c" />
      <path d="M678 1746l1-9 2-1v10z" fill="#111" />
      <path d="M686 1730l1.500 4 4 1.500-4 1.500-1.500 4-1.500-4-4-1.500 4-1.500z" fill="#fff" />
      <text x="709" y="1747" textLength="124" lengthAdjust="spacingAndGlyphs" fontFamily="Inter, sans-serif" fontWeight="700" fontSize="33" fill="#fff" stroke="#9c9c9c" strokeWidth="6" strokeLinejoin="round" paintOrder="stroke">mapbox</text>
    </svg>
  );
}

const BLUE = "bg-[#4682fb]";
const ORANGE = "bg-[#fd9f49]";
const RED = "bg-[#f50a00]";

const popupRows: { name: string; value: string; pct?: string; dot?: string }[] = [
  { name: "WIlayah", value: "JAWA TIMUR" },
  { name: "Total Pelapor Yang Lapor", value: "5" },
  { name: "Total Laporan", value: "25" },
  { name: "Anies Rasyid Baswedan", value: "23", pct: "(92%)", dot: BLUE },
  { name: "Prabowo Subianto", value: "2", pct: "(8%)", dot: ORANGE },
  { name: "Ganjar Pranowo", value: "0", pct: "(0%)", dot: RED },
];

function Popup() {
  return (
    <div className="absolute top-[252px] left-[996px] h-[703px] w-[800px] rounded-[6px] bg-white pr-[30px] pl-5 font-['Liberation_Sans',sans-serif] text-[24px] leading-8 text-[#181c32] shadow-[0_2px_4px_rgba(0,0,0,0.12)]">
      <svg className="absolute -top-[19px] left-[220px] h-5 w-10" viewBox="0 0 40 20"><path d="M20 0l20 20H0z" fill="#fff" /></svg>
      <span className="absolute top-[5px] right-[22px] text-[24px] leading-8 text-black">×</span>
      <div className="flex h-[160px] items-center border-b-2 border-[#eff2f5] pt-[17px] pl-[6px]">
        <Fit w={302} className="text-[33px] leading-10">Informasi Canvasing</Fit>
      </div>
      <div className="mr-[6px] ml-[7px] mt-[7px] flex flex-col">
        {popupRows.map((r, i) => (
          <div key={r.name} className={`flex h-[79px] items-center pb-[3px] pl-[19px] ${i % 2 === 0 ? "bg-[#f9fafc]" : ""}`}>
            <div className="flex w-[488px] items-center">
              {r.dot && <span className={`mr-[6px] h-[21px] w-[21px] rounded-[2px] ${r.dot}`} />}
              {r.name}
            </div>
            <div>
              {r.value} {r.pct && <b>{r.pct}</b>}
            </div>
          </div>
        ))}
      </div>
    </div>
  );
}

function MapPanel() {
  return (
    <div className="relative ml-[59px] h-[1040px] w-[2083px] overflow-hidden">
      <MapCanvas />
      <div className="absolute top-5 left-5 flex h-[174px] w-[58px] flex-col divide-y-2 divide-[#dddddd] rounded-[8px] bg-white ring-4 ring-black/10">
        <span className="flex flex-1 items-center justify-center pt-[2px]">
          <svg className="h-6 w-6" viewBox="0 0 24 24" stroke="#333" strokeWidth="5.500" strokeLinecap="round"><path d="M12 3v18M3 12h18" /></svg>
        </span>
        <span className="flex flex-1 items-center justify-center pt-[2px]">
          <svg className="h-6 w-6" viewBox="0 0 24 24" stroke="#333" strokeWidth="5.500" strokeLinecap="round"><path d="M3 12h18" /></svg>
        </span>
        <span className="flex flex-1 items-center justify-center">
          <svg className="h-[34px] w-4" viewBox="0 0 16 34"><path d="M8 0l7.500 15H.500z" fill="#333" /><path d="M8 34l7.500-15H.500z" fill="#ccc" /></svg>
        </span>
      </div>
      <Popup />
      <span className="absolute top-[479px] right-[23px] flex h-[83px] w-[83px] items-center justify-center rounded-[20px] bg-white">
        <svg className="-mt-1 h-[22px] w-6" viewBox="0 0 24 22" fill="none" stroke="#9899b0" strokeWidth="3.600" strokeLinecap="round" strokeLinejoin="round"><path d="M22 11H3M10.500 2L2 11l8.500 9" /></svg>
      </span>
      <div className="absolute right-0 bottom-0 flex h-10 w-[540px] items-center bg-white/50 pl-[10px] font-['Liberation_Sans',sans-serif] text-[24px] leading-10 text-[#404040]">
        <Fit w={310}>© Mapbox © OpenStreetMap</Fit>
        <Fit w={198} className="ml-[11px] font-bold">Improve this map</Fit>
      </div>
    </div>
  );
}

/* ---------- card ---------- */

function Legend({ color, label, w, ml = "" }: { color: string; label: string; w: number; ml?: string }) {
  return (
    <span className={`flex items-center ${ml}`}>
      <span className={`h-[22px] w-[22px] rounded-[2px] ${color}`} />
      <Fit w={w} className="ml-[7px]">{label}</Fit>
    </span>
  );
}

function Card() {
  return (
    <section className="mt-[30px] ml-[60px] flex h-[1400px] w-[2200px] shrink-0 flex-col rounded-t-2xl bg-white">
      <div className="flex h-[161px] shrink-0 border-b-2 border-[#eff2f5] pr-[62px] pl-[78px]">
        <div className="flex flex-col">
          <div className="flex h-[88px] items-center pt-[4px]">
            <svg className="mt-1 h-[33px] w-[25px]" viewBox="0 0 24 33">
              <path fillRule="evenodd" d="M12 0A12 12 0 0 0 0 12q0 7 12 21 12-14 12-21A12 12 0 0 0 12 0zM12 7.500a4.700 5 0 1 1 0 10 4.700 5 0 1 1 0-10z" fill="#006c64" />
            </svg>
            <Fit w={258} className="mt-[13px] ml-[13px] text-[35px] leading-[44px] font-semibold text-[#181c32]">Peta Informasi</Fit>
          </div>
          <div className="flex gap-[7px] text-[22px] leading-[38px] font-semibold text-white">
            <span className="flex h-[39px] w-[243px] rounded-[8px] bg-[#006c64] pl-[13px]"><Fit w={217}>Filter berdasarkan :</Fit></span>
            <span className="flex h-[39px] w-[260px] rounded-[8px] bg-[#006c64] pl-[13px]"><Fit w={227}>Tipe: Laporan Survei</Fit></span>
            <span className="flex h-[39px] w-[213px] rounded-[8px] bg-[#006c64] pl-[13px]"><Fit w={180}>Provinsi: Semua</Fit></span>
          </div>
        </div>
        <div className="mt-[37px] ml-auto flex h-[84px] w-[400px] items-center rounded-[12px] border-2 border-[#e4e6ef] px-[27px]">
          <span className="w-[343px] overflow-hidden text-[29px] leading-9 font-medium text-[#5e6278]">
            <Fit w={353} className="-mt-px -mb-2">01/01/2024 - 02/05/2024</Fit>
          </span>
        </div>
        <div className="mt-[37px] ml-[13px] flex h-[84px] w-[86px] items-center justify-center rounded-[12px] bg-[#e6f0ee]">
          <svg className="-mt-1 h-[26px] w-6" viewBox="0 0 24 26" fill="none" stroke="#006c64" strokeWidth="2.200">
            <path d="M2 10Q5 2 12 2q6 0 10 6M23 1v8h-8M22 16q-3 8-10 8-6 0-10-6M1 25v-8h8" />
          </svg>
        </div>
      </div>
      <div className="flex h-[115px] shrink-0 items-center pt-[26px] pl-[59px] text-[25px] leading-8 text-[#181c32]">
        <Legend color={BLUE} label="Anies" w={65} />
        <Legend color={ORANGE} label="Prabowo" w={108} ml="ml-[26px]" />
        <Legend color={RED} label="Ganjar" w={83} ml="ml-[26px]" />
      </div>
      <MapPanel />
    </section>
  );
}

function Scrollbar() {
  return (
    <div className="z-30 flex w-[30px] shrink-0 flex-col items-center bg-[#f1f1f1]">
      <svg className="mt-3 h-2 w-[14px]" viewBox="0 0 14 8"><path d="M7 0l7 8H0z" fill="#a3a3a3" /></svg>
      <span className="mt-[10px] h-[1293px] w-[26px] bg-[#c1c1c1]" />
      <svg className="mt-auto mb-3 h-2 w-[14px]" viewBox="0 0 14 8"><path d="M7 8l7-8H0z" fill="#505050" /></svg>
    </div>
  );
}

export default function App() {
  return (
    <div className="flex h-[1800px] w-[2880px] flex-col overflow-hidden bg-white font-['Inter',sans-serif]">
      <DesktopBar />
      <TabStrip />
      <Toolbar />
      <BookmarkBar />
      <div className="flex h-[1504px]">
        <SideMenu />
        <main className="flex w-[2320px] flex-col overflow-hidden bg-[#f3f7fa]">
          <PageHeader />
          <Card />
        </main>
        <Scrollbar />
      </div>
    </div>
  );
}
